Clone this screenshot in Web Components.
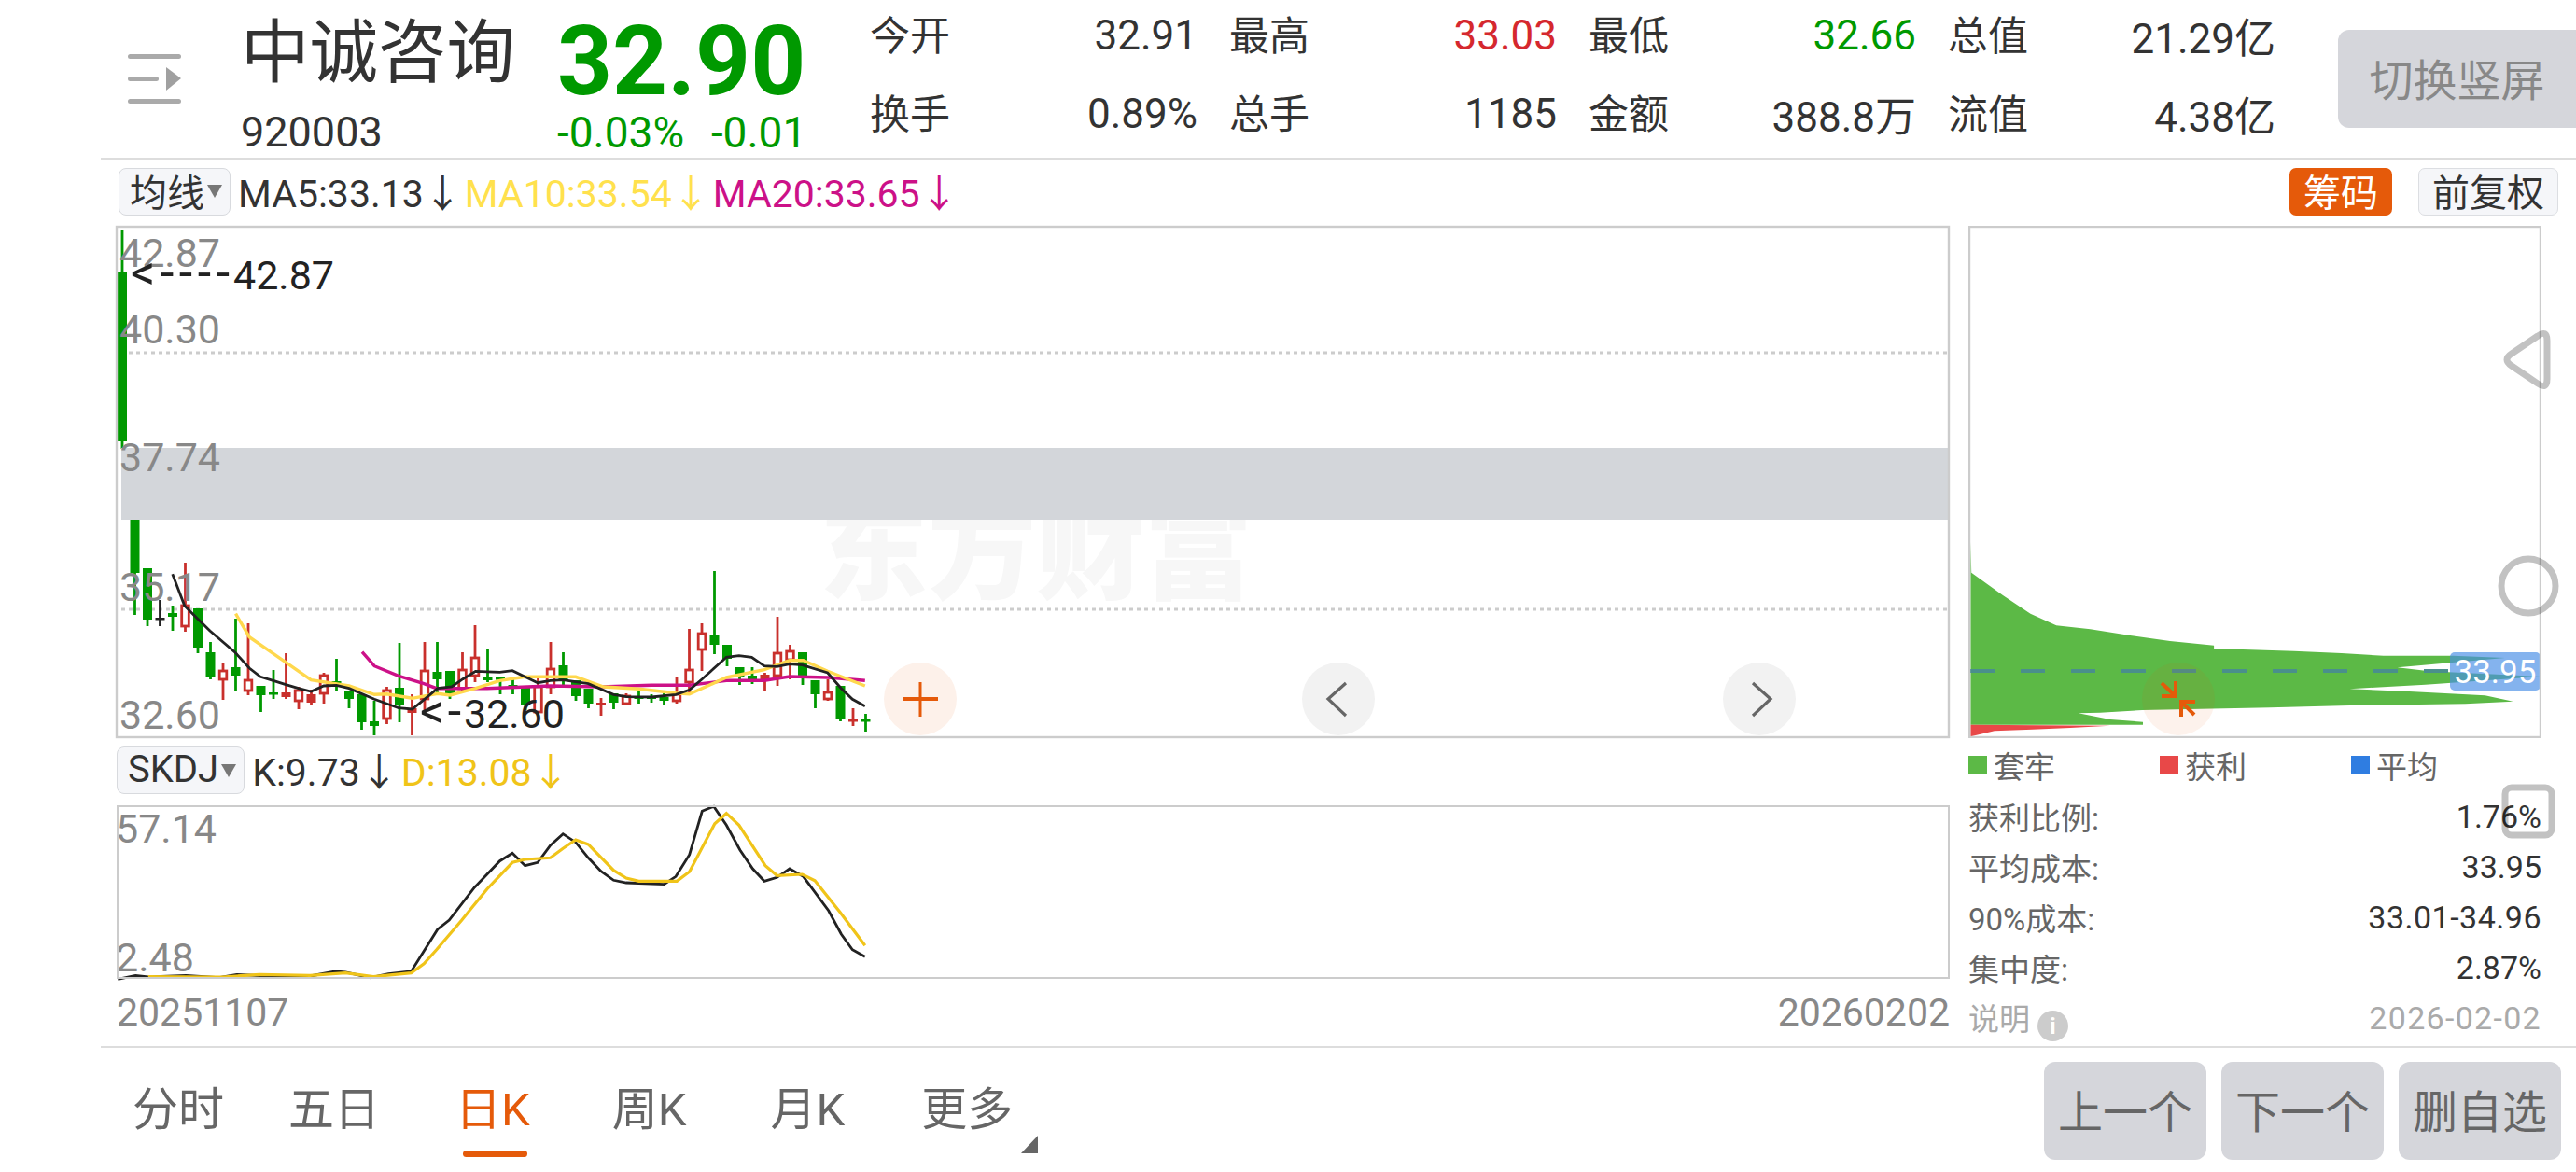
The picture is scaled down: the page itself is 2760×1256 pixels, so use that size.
<!DOCTYPE html>
<html lang="zh">
<head>
<meta charset="utf-8">
<title>中诚咨询</title>
<style>
  html, body { margin: 0; padding: 0; background: #fff; }
  body { width: 2760px; height: 1256px; overflow: hidden; font-family: Roboto, "Noto Sans CJK SC", sans-serif; color: #333; }
</style>
</head>
<body>
<quote-screen></quote-screen>
<script>
const GREEN = '#009900', RED = '#c9302c', ORANGE = '#e55a0a';
const pts = (list, fx, fy) => list.map(p => `${fx(p[0]).toFixed(1)},${fy(p[1]).toFixed(1)}`).join(' ');

class StatCell extends HTMLElement {
  connectedCallback() {
    const tone = this.getAttribute('tone');
    const col = tone === 'up' ? '#d5282e' : tone === 'down' ? GREEN : '#333';
    this.attachShadow({ mode: 'open' }).innerHTML = `
      <style>
        :host { display: flex; justify-content: space-between; align-items: center; height: 84px; }
        .l { font-size: 43px; }
        .v { font-size: 44px; color: ${col}; margin-top: 6px; }
      </style>
      <span class="l">${this.getAttribute('label')}</span><span class="v"><slot></slot></span>`;
  }
}

class StockHeader extends HTMLElement {
  connectedCallback() {
    this.attachShadow({ mode: 'open' }).innerHTML = `
      <style>
        :host { display: flex; height: 169px; border-bottom: 2px solid #ddd; margin-left: 108px; padding-left: 29px; position: relative; }
        .menu { width: 57px; height: 54px; margin-top: 58px; flex: none; }
        .name { width: 339px; margin-left: 64px; flex: none; }
        .name b { display: block; font-weight: 400; font-size: 73.5px; line-height: 96px; margin: 9px 0 0 0; color: #333; }
        .name span { display: block; font-size: 45px; line-height: 60px; margin-top: 7px; }
        .price { width: 335px; flex: none; color: ${GREEN}; }
        .price b { display: block; font-size: 103px; line-height: 94px; margin-top: 19px; font-weight: 700; }
        .price span { display: block; font-size: 46px; line-height: 60px; margin-top: -1px; white-space: pre; word-spacing: 3px; }
        .stats { width: 1505px; flex: none; display: grid; grid-template-columns: repeat(4, 351px); column-gap: 34px; grid-auto-rows: 84px; margin-top: -7px; }
        .switch { margin-left: 68px; margin-top: 32px; width: 255px; height: 105px; box-sizing: border-box; padding-bottom: 5px; background: #d5d6db; color: #888; font-size: 47px; border-radius: 12px 0 0 12px; display: flex; align-items: center; justify-content: center; flex: none; }
      </style>
      <svg class="menu" viewBox="137 58 57 54">
        <g fill="#aaa"><rect x="137" y="58" width="57" height="5" rx="2.5"/><rect x="137" y="82" width="33" height="5" rx="2.5"/><rect x="137" y="106" width="57" height="5" rx="2.5"/></g>
        <path d="M178 72 L194 84 L178 97 Z" fill="#a0a0a0"/>
      </svg>
      <div class="name"><b>中诚咨询</b><span>920003</span></div>
      <div class="price"><b>32.90</b><span>-0.03%  -0.01</span></div>
      <div class="stats">
        <stat-cell label="今开">32.91</stat-cell>
        <stat-cell label="最高" tone="up">33.03</stat-cell>
        <stat-cell label="最低" tone="down">32.66</stat-cell>
        <stat-cell label="总值">21.29亿</stat-cell>
        <stat-cell label="换手">0.89%</stat-cell>
        <stat-cell label="总手">1185</stat-cell>
        <stat-cell label="金额">388.8万</stat-cell>
        <stat-cell label="流值">4.38亿</stat-cell>
      </div>
      <div class="switch">切换竖屏</div>`;
  }
}

class PillSelect extends HTMLElement {
  connectedCallback() {
    this.attachShadow({ mode: 'open' }).innerHTML = `
      <style>
        :host { display: inline-flex; align-items: center; box-sizing: border-box; height: 51px; padding: 0 8px 3px 11px; gap: 3px; background: #f5f6f9; border: 1px solid #d8dade; border-radius: 8px; font-size: 40px; color: #333; flex: none; }
        i { width: 0; height: 0; border-left: 8px solid transparent; border-right: 8px solid transparent; border-top: 14px solid #777; margin-top: 3px; }
      </style>
      <slot></slot><i></i>`;
  }
}

class IndicatorBar extends HTMLElement {
  connectedCallback() {
    this.attachShadow({ mode: 'open' }).innerHTML = `
      <style>
        :host { display: flex; align-items: center; font-size: 41px; white-space: pre; }
        ::slotted(span) { margin-left: 3px; padding-bottom: 3px; }
        ::slotted(pill-select) { margin-right: 5px; }
      </style>
      <slot></slot>`;
  }
}

class ChipTag extends HTMLElement {
  connectedCallback() {
    const on = this.hasAttribute('on');
    this.attachShadow({ mode: 'open' }).innerHTML = `
      <style>
        :host { display: flex; align-items: center; justify-content: center; box-sizing: border-box; height: 51px; padding: 0 14px 3px; font-size: 40px; border-radius: 7px;
          background: ${on ? ORANGE : '#f5f6f9'}; color: ${on ? '#fff' : '#333'}; ${on ? 'padding: 0 15px 3px;' : 'border: 1px solid #dcdee2;'} }
      </style>
      <slot></slot>`;
  }
}

class CandleChart extends HTMLElement {
  connectedCallback() {
    // [hollow red=r / filled red=R / green=g / black=k, wick top, wick bottom, body top, body bottom]
    const c = [
      ['g',245,480,290,472],['g',556,658,556,613],['g',608,670,608,663],['k',642,670,661,663],['g',648,675,656,660],
      ['r',602,676,648,670],['g',651,699,651,693],['g',687,727,698,725],['r',709,749,718,727],['g',662,739,714,723],
      ['r',667,744,728,739],['g',734,762,734,744],['g',717,748,741,743],['R',699,748,741,746],['r',735,759,739,750],
      ['R',738,754,743,752],['r',720,753,723,742],['g',705,740,729,731],['g',740,758,740,748],['g',743,781,743,773],
      ['g',750,787,772,777],['r',735,775,739,769],['g',688,773,736,755],['R',743,787,758,763],['r',687,760,718,748],
      ['g',687,743,719,727],['g',718,748,718,743],['r',698,740,717,737],['r',669,730,704,723],['g',695,730,724,728],
      ['g',724,743,725,727],['g',727,743,733,735],['g',735,760,735,755],['r',723,763,735,762],['r',687,743,716,735],
      ['g',698,733,712,727],['g',728,750,728,745],['g',737,758,737,753],['R',747,766,752,754],['g',742,759,742,752],
      ['r',742,754,745,753],['g',740,753,745,748],['g',743,752,745,748],['g',740,754,746,750],['r',725,753,743,750],
      ['r',673,743,717,730],['r',667,718,678,695],['g',611,700,679,690],['g',690,713,690,705],['g',714,733,714,725],
      ['g',714,732,723,727],['R',720,739,722,727],['r',660,734,699,723],['r',690,727,697,706],['g',698,733,698,723],
      ['g',728,758,728,743],['r',727,750,741,748],['g',734,772,734,770],['R',758,777,770,772],['g',764,783,770,772]
    ];
    let candles = '';
    c.forEach((d, i) => {
      const x = 131 + 13.5 * i, [t, hi, lo, top, bot] = d;
      const col = t === 'g' ? GREEN : t === 'k' ? '#222' : RED;
      candles += `<line x1="${x}" x2="${x}" y1="${hi}" y2="${lo}" stroke="${col}" stroke-width="2.8"/>`;
      if (t === 'r') candles += `<rect x="${x - 3.8}" y="${top}" width="7.6" height="${bot - top}" fill="#fff" stroke="${col}" stroke-width="2.8"/>`;
      else candles += `<rect x="${x - 5}" y="${top}" width="10" height="${Math.max(bot - top, 2.5)}" fill="${col}"/>`;
    });
    const fx = v => 110 + v / 1.845, fy = v => 580 + v / 3;
    const ma5 = [[138,103],[162,205],[187,245],[212,285],[262,355],[290,405],[312,433],[337,445],[362,458],[387,470],[412,480],[437,462],[462,460],[487,470],[537,505],[585,533],[612,537],[640,500],[662,470],[690,465],[712,440],[737,415],[785,418],[810,413],[860,452],[885,445],[910,443],[960,455],[1010,490],[1035,497],[1085,498],[1133,490],[1160,475],[1185,440],[1233,370],[1258,365],[1283,370],[1308,398],[1333,400],[1358,392],[1383,395],[1433,420],[1460,470],[1482,505],[1507,527]];
    const ma10 = [[263,230],[290,305],[337,358],[412,443],[487,462],[537,490],[562,488],[612,502],[662,487],[687,492],[737,470],[785,445],[835,433],[935,433],[990,465],[1060,472],[1133,485],[1160,488],[1233,435],[1308,410],[1358,380],[1385,380],[1433,415],[1507,462]];
    const ma20 = [[513,353],[537,398],[585,430],[635,455],[660,470],[760,470],[885,462],[985,465],[1085,460],[1160,460],[1233,445],[1308,445],[1358,432],[1433,435],[1507,445]];
    const axis = [['42.87',270],['40.30',352],['37.74',489],['35.17',628],['32.60',765]];
    this.attachShadow({ mode: 'open' }).innerHTML = `
      <style>
        :host { display: block; height: 549px; }
        svg { display: block; overflow: visible; font-family: Roboto, "Noto Sans CJK SC", sans-serif; }
      </style>
      <svg width="1964" height="549" viewBox="125 241 1964 549">
        <text x="878" y="632" font-size="116" font-weight="900" fill="#f7f7f7">东方财富</text>
        <g stroke="#ccc" stroke-width="3" stroke-dasharray="4 4"><line x1="130" x2="2089" y1="377" y2="377"/><line x1="130" x2="2089" y1="652" y2="652"/></g>
        ${candles}
        <rect x="130" y="479" width="1959" height="77" fill="#d3d6da"/>
        <polyline points="${pts(ma20, fx, fy)}" fill="none" stroke="#cc1188" stroke-width="3.4"/>
        <polyline points="${pts(ma10, fx, fy)}" fill="none" stroke="#ffd84d" stroke-width="3.4"/>
        <polyline points="${pts(ma5, fx, fy)}" fill="none" stroke="#222" stroke-width="2.8"/>
        <circle cx="986" cy="748" r="39" fill="#fdf1ea"/>
        <path d="M967 748H1005" stroke="${ORANGE}" stroke-width="4" fill="none"/>
        <path d="M986 730V767" stroke="${ORANGE}" stroke-width="3" fill="none"/>
        <circle cx="1434" cy="748" r="39" fill="#f2f2f2"/>
        <path d="M1442 731L1423 748L1442 766" stroke="#666" stroke-width="3.2" fill="none"/>
        <circle cx="1885" cy="748" r="39" fill="#f2f2f2"/>
        <path d="M1878 731L1897 748L1878 766" stroke="#666" stroke-width="3.2" fill="none"/>
        <g font-size="43" fill="#888">${axis.map(a => `<text x="128" y="${a[1] + 15}">${a[0]}</text>`).join('')}</g>
        <g font-size="43" fill="#222">
          <text y="309"><tspan x="140" font-size="52" textLength="106" lengthAdjust="spacing">&lt;----</tspan><tspan x="250">42.87</tspan></text>
          <text y="779"><tspan x="450" font-size="52" textLength="44" lengthAdjust="spacing">&lt;-</tspan><tspan x="497">32.60</tspan></text>
        </g>
        <rect x="125" y="242" width="1963" height="547" fill="none" stroke="#ccc" stroke-width="2.4"/>
      </svg>`;
  }
}

class KdjChart extends HTMLElement {
  connectedCallback() {
    const fx = v => 110 + v / 1.845, fy = v => 800 + v / 3;
    const k = [[30,745],[65,733],[90,738],[165,733],[230,740],[265,730],[330,735],[410,735],[460,720],[480,723],[530,740],[565,728],[610,720],[635,655],[662,585],[685,555],[735,450],[785,365],[810,340],[835,380],[860,370],[885,315],[910,278],[935,305],[960,355],[985,398],[1010,427],[1035,435],[1110,440],[1133,415],[1160,345],[1185,205],[1208,190],[1233,250],[1260,330],[1285,390],[1308,430],[1333,418],[1358,390],[1385,415],[1435,525],[1460,600],[1482,650],[1507,673]];
    const d = [[90,737],[235,738],[310,730],[410,733],[480,725],[535,737],[610,725],[635,695],[660,650],[710,555],[760,455],[810,370],[835,360],[885,355],[910,325],[935,297],[960,312],[1010,395],[1035,420],[1060,430],[1135,430],[1160,400],[1210,245],[1233,212],[1258,250],[1310,380],[1333,412],[1383,408],[1408,428],[1458,530],[1507,637]];
    this.attachShadow({ mode: 'open' }).innerHTML = `
      <style>
        :host { display: block; height: 186px; }
        svg { display: block; overflow: visible; font-family: Roboto, sans-serif; }
      </style>
      <svg width="1964" height="186" viewBox="125 862 1964 186">
        <g font-size="43" fill="#888"><text x="124" y="902">57.14</text><text x="124" y="1040">2.48</text></g>
        <polyline points="${pts(k, fx, fy)}" fill="none" stroke="#222" stroke-width="2.8"/>
        <polyline points="${pts(d, fx, fy)}" fill="none" stroke="#f0c419" stroke-width="3.2"/>
        <rect x="126" y="863" width="1962" height="184" fill="none" stroke="#ccc" stroke-width="2"/>
      </svg>`;
  }
}

class ChipChart extends HTMLElement {
  connectedCallback() {
    const fx = v => 2090 + v / 2.34, fy = v => 580 + v / 3;
    const green = [[50,0],[52,98],[130,170],[200,230],[265,268],[350,280],[450,300],[550,318],[660,332],[660,342],[860,350],[980,357],[1085,365],[1260,365],[1390,372],[1120,403],[1200,415],[1480,432],[1190,458],[1050,468],[1000,472],[1150,480],[1340,493],[1410,512],[1290,520],[1000,525],[800,532],[480,540],[375,548],[320,550],[400,570],[482,578],[482,587],[50,587]];
    const red = [[50,587],[400,590],[300,597],[205,602],[110,607],[50,625]];
    this.attachShadow({ mode: 'open' }).innerHTML = `
      <style>
        :host { display: block; height: 549px; }
        svg { display: block; font-family: Roboto, sans-serif; }
      </style>
      <svg width="614" height="549" viewBox="2109 241 614 549">
        <polygon points="${pts(green, fx, fy)}" fill="#5cb946"/>
        <polygon points="${pts(red, fx, fy)}" fill="#e84848"/>
        <line x1="2111" x2="2626" y1="718" y2="718" stroke="#4a8f8c" stroke-width="4" stroke-dasharray="26 28"/>
        <circle cx="2334" cy="748" r="39" fill="#e55a0a" fill-opacity="0.08"/>
        <g fill="none" stroke="${ORANGE}" stroke-width="4">
          <path d="M2331 729V745H2316M2331 745L2316 731"/>
          <path d="M2352 751H2337V767M2337 751L2351 765"/>
        </g>
        <rect x="2625" y="698" width="97" height="41" rx="5" fill="#4a8fe6" fill-opacity="0.68"/>
        <text x="2673.5" y="731" text-anchor="middle" font-size="35" fill="#fff">33.95</text>
        <rect x="2110" y="242" width="612" height="547" fill="none" stroke="#ccc" stroke-width="2.4"/>
      </svg>`;
  }
}

class ChipLegend extends HTMLElement {
  connectedCallback() {
    const item = (col, t) => `<span class="it"><i style="background:${col}"></i>${t}</span>`;
    this.attachShadow({ mode: 'open' }).innerHTML = `
      <style>
        :host { display: flex; height: 57px; align-items: center; font-size: 33px; color: #666; }
        .it { width: 205px; display: flex; align-items: center; gap: 7px; flex: none; }
        i { width: 20px; height: 20px; display: block; }
      </style>
      ${item('#5cb946', '套牢')}${item('#e84848', '获利')}${item('#2f7de1', '平均')}`;
  }
}

class ChipRow extends HTMLElement {
  connectedCallback() {
    this.attachShadow({ mode: 'open' }).innerHTML = `
      <style>
        :host { display: flex; justify-content: space-between; align-items: center; height: 54px; font-size: 33px; color: #666; }
        .v { color: #333; font-size: 34px; }
        :host([muted]) { color: #aaa; }
        :host([muted]) .v { color: #aaa; }
      </style>
      <span class="k"><slot name="k"></slot></span><span class="v"><slot></slot></span>`;
  }
}

class PeriodTabs extends HTMLElement {
  connectedCallback() {
    const tabs = [['分时', 0], ['五日', 69], ['日K', 81], ['周K', 88], ['月K', 90], ['更多', 82]];
    this.attachShadow({ mode: 'open' }).innerHTML = `
      <style>
        :host { display: flex; padding-left: 34px; height: 134px; font-size: 49px; color: #666; flex: none; }
        span { position: relative; line-height: 66px; margin-top: 34px; height: 66px; white-space: pre; }
        .on { color: ${ORANGE}; }
        .on::after { content: ""; position: absolute; left: 8px; top: 76px; width: 69px; height: 7px; background: ${ORANGE}; border-radius: 4px; }
        .more::after { content: ""; position: absolute; left: 107px; top: 60px; width: 0; height: 0; border-left: 18px solid transparent; border-bottom: 19px solid #666; }
      </style>
      ${tabs.map(t => `<span class="${t[0] === '日K' ? 'on' : t[0] === '更多' ? 'more' : ''}" style="margin-left:${t[1]}px">${t[0]}</span>`).join('')}`;
  }
}

class ActionButton extends HTMLElement {
  connectedCallback() {
    this.attachShadow({ mode: 'open' }).innerHTML = `
      <style>
        :host { display: flex; box-sizing: border-box; width: 174px; height: 105px; padding-bottom: 5px; align-items: center; justify-content: center; background: #d5d6db; color: #666; font-size: 48px; border-radius: 12px; }
      </style>
      <slot></slot>`;
  }
}

class NavOverlay extends HTMLElement {
  connectedCallback() {
    this.attachShadow({ mode: 'open' }).innerHTML = `
      <style>
        :host { position: absolute; left: 2670px; top: 340px; width: 80px; height: 570px; pointer-events: none; }
        svg { display: block; }
      </style>
      <svg width="80" height="570" viewBox="2670 340 80 570" fill="none" stroke="#000" stroke-opacity="0.24" stroke-width="7" stroke-linejoin="round">
        <path d="M2719 360Q2729 353 2729 365V406Q2729 418 2719 411L2691 392Q2681 385.500 2691 379Z"/>
        <circle cx="2709" cy="628" r="29"/>
        <rect x="2684" y="844" width="50" height="51" rx="7"/>
      </svg>`;
  }
}

class QuoteScreen extends HTMLElement {
  connectedCallback() {
    this.attachShadow({ mode: 'open' }).innerHTML = `
      <style>
        :host { display: block; position: relative; width: 2760px; height: 1256px; overflow: hidden; }
        .ma { display: flex; justify-content: space-between; align-items: center; height: 71px; padding: 0 19px 3px 127px; box-sizing: border-box; }
        .tags { display: flex; gap: 28px; }
        .body { display: flex; margin-left: 125px; gap: 20px; height: 879px; }
        .left { width: 1964px; flex: none; }
        .right { width: 614px; flex: none; }
        .kdj { display: flex; height: 72px; padding-bottom: 3px; box-sizing: border-box; align-items: center; }
        .dates { display: flex; justify-content: space-between; font-size: 41px; color: #888; height: 72px; align-items: center; }
        .info { display: inline-flex; width: 33px; height: 33px; border-radius: 50%; background: #ccc; color: #fff; font-size: 24px; font-weight: 700; align-items: center; justify-content: center; margin-left: 8px; vertical-align: -4px; }
        .foot { display: flex; justify-content: space-between; margin-left: 108px; border-top: 2px solid #ddd; height: 135px; padding-right: 16px; box-sizing: border-box; }
        .acts { display: flex; gap: 16px; padding-top: 15px; }
        .y { color: #ffe14d; } .m { color: #cc1188; } .d { color: #f0c419; }
      </style>
      <stock-header></stock-header>
      <div class="ma">
        <indicator-bar>
          <pill-select>均线</pill-select>
          <span>MA5:33.13↓</span><span class="y">MA10:33.54↓</span><span class="m">MA20:33.65↓</span>
        </indicator-bar>
        <div class="tags"><chip-tag on>筹码</chip-tag><chip-tag>前复权</chip-tag></div>
      </div>
      <div class="body">
        <div class="left">
          <candle-chart></candle-chart>
          <div class="kdj">
            <indicator-bar>
              <pill-select>SKDJ</pill-select>
              <span>K:9.73↓</span><span class="d">D:13.08↓</span>
            </indicator-bar>
          </div>
          <kdj-chart></kdj-chart>
          <div class="dates"><span>20251107</span><span>20260202</span></div>
        </div>
        <div class="right">
          <chip-chart></chip-chart>
          <chip-legend></chip-legend>
          <chip-row><span slot="k">获利比例:</span>1.76%</chip-row>
          <chip-row><span slot="k">平均成本:</span>33.95</chip-row>
          <chip-row><span slot="k">90%成本:</span><span style="letter-spacing:.5px">33.01-34.96</span></chip-row>
          <chip-row><span slot="k">集中度:</span>2.87%</chip-row>
          <chip-row muted><span slot="k">说明<span class="info">i</span></span><span style="letter-spacing:1.3px">2026-02-02</span></chip-row>
        </div>
      </div>
      <div class="foot">
        <period-tabs></period-tabs>
        <div class="acts">
          <action-button>上一个</action-button><action-button>下一个</action-button><action-button>删自选</action-button>
        </div>
      </div>
      <nav-overlay></nav-overlay>`;
  }
}

customElements.define('stat-cell', StatCell);
customElements.define('stock-header', StockHeader);
customElements.define('pill-select', PillSelect);
customElements.define('indicator-bar', IndicatorBar);
customElements.define('chip-tag', ChipTag);
customElements.define('candle-chart', CandleChart);
customElements.define('kdj-chart', KdjChart);
customElements.define('chip-chart', ChipChart);
customElements.define('chip-legend', ChipLegend);
customElements.define('chip-row', ChipRow);
customElements.define('period-tabs', PeriodTabs);
customElements.define('action-button', ActionButton);
customElements.define('nav-overlay', NavOverlay);
customElements.define('quote-screen', QuoteScreen);
</script>
</body>
</html>
